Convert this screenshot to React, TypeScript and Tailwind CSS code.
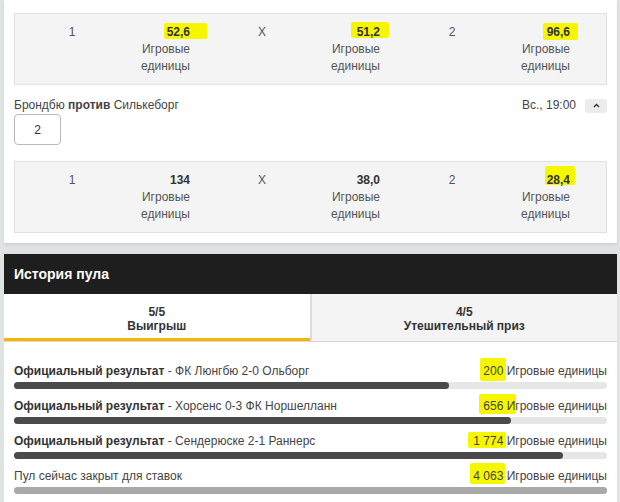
import React from 'react';

type Odd = { label: string; value: string; mark?: string };

const ROW_1: Odd[] = [
  { label: '1', value: '52,6', mark: 'left-[-3px] right-[-17px] top-[-1px] bottom-[2px]' },
  { label: 'X', value: '51,2', mark: 'left-[-6px] right-[-9px] top-[-2px] bottom-[3px]' },
  { label: '2', value: '96,6', mark: 'left-[-4px] right-[-8px] top-[-1px] bottom-[1px]' },
];

const ROW_2: Odd[] = [
  { label: '1', value: '134' },
  { label: 'X', value: '38,0' },
  { label: '2', value: '28,4', mark: 'left-[-2px] right-[-5px] top-[-6px] bottom-[4px]' },
];

const RESULTS = [
  { bold: 'Официальный результат', rest: ' - ФК Люнгбю 2-0 Ольборг', amount: '200', fill: 73.4, dark: true, mark: 'left-[-3px] right-[-3px] top-[-5px] bottom-[-1px]' },
  { bold: 'Официальный результат', rest: ' - Хорсенс 0-3 ФК Норшелланн', amount: '656', fill: 83.8, dark: true, mark: 'left-[-4px] right-[-13px] top-[-4px] bottom-[1px]' },
  { bold: 'Официальный результат', rest: ' - Сендерюске 2-1 Раннерс', amount: '1 774', fill: 92.6, dark: true, mark: 'left-[-5px] right-[-3px] top-[-1px] bottom-[2px]' },
  { bold: '', rest: 'Пул сейчас закрыт для ставок', amount: '4 063', fill: 100, dark: false, mark: 'left-[-3px] right-[-2px] top-[-5px] bottom-[1px]' },
];

// жёлтая пометка маркером под числом (родитель должен быть isolate)
function Marked({ text, mark }: { text: string; mark?: string }) {
  if (!mark) return <span>{text}</span>;
  return (
    <span className="relative inline-block">
      <span className={`absolute -z-10 rounded-[2px] bg-[#f6f600] ${mark}`} />
      {text}
    </span>
  );
}

function OddsBox({ odds }: { odds: Odd[] }) {
  return (
    <div className="flex gap-[24px] border border-[#e0e0e0] bg-[#f4f4f4] pb-[9px] pl-[9px] pt-[10px] leading-[17px]">
      {odds.map((o) => (
        <div key={o.label} className="flex">
          <div className="w-[96px] text-center text-[#555]">{o.label}</div>
          <div className="isolate w-[70px] text-right">
            <div className="font-bold text-[#333]">
              <Marked text={o.value} mark={o.mark} />
            </div>
            <div className="text-[#555]">Игровые единицы</div>
          </div>
        </div>
      ))}
    </div>
  );
}

export default function App() {
  return (
    <div
      className="min-h-screen bg-[#dfe3e3] pl-[4px] pr-[3px] text-[12px] text-[#333]"
      style={{ fontFamily: '"Liberation Sans", Arial, sans-serif' }}
    >
      {/* Карточка матча */}
      <div className="bg-white px-[10px] pb-[10px] pt-[13px] shadow-[0_2px_3px_rgba(0,0,0,0.08)]">
        <OddsBox odds={ROW_1} />

        <div className="mt-[12px] flex items-center justify-between leading-[17px]">
          <div className="text-[#444]">
            Брондбю <span className="font-bold">против</span> Силькеборг
          </div>
          <div className="flex items-center gap-[9px] text-[#444]">
            <span>Вс., 19:00</span>
            <button className="flex h-[14px] w-[22px] items-center justify-center rounded-[3px] bg-[#ececec]">
              <svg width="7" height="5" viewBox="0 0 7 5" fill="none">
                <path d="M1 4L3.5 1.5L6 4" stroke="#333" strokeWidth="1.4" />
              </svg>
            </button>
          </div>
        </div>

        <div className="flex h-[31px] w-[47px] items-center justify-center rounded-[4px] border border-[#bbb] text-[#333]">
          2
        </div>

        <div className="mt-[16px]">
          <OddsBox odds={ROW_2} />
        </div>
      </div>

      {/* История пула */}
      <div className="mt-[11px] bg-white">
        <div className="flex h-[40px] items-center bg-[#1e1e1e] pl-[10px] text-[14px] font-bold text-white">
          История пула
        </div>

        <div className="flex border-b border-[#d8d8d8] text-center font-bold leading-[14px] text-[#333]">
          <div className="h-[47px] flex-1 border-b-[3px] border-[#f7b500] bg-white pt-[11px]">
            <div>5/5</div>
            <div>Выигрыш</div>
          </div>
          <div className="h-[47px] flex-1 border-l-2 border-[#dcdcdc] bg-[#f4f4f4] pt-[11px]">
            <div>4/5</div>
            <div>Утешительный приз</div>
          </div>
        </div>

        <div className="flex flex-col gap-[9px] px-[10px] pb-[12px] pt-[21px]">
          {RESULTS.map((r, i) => (
            <div key={i}>
              <div className="flex justify-between leading-[17px]">
                <div className="text-[#444]">
                  {r.bold && <span className="font-bold text-[#333]">{r.bold}</span>}
                  {r.rest}
                </div>
                <div className="isolate text-[#444]">
                  <Marked text={r.amount} mark={r.mark} /> Игровые единицы
                </div>
              </div>
              <div className="mt-[2px] h-[7px] rounded-full bg-[#e6e6e6]">
                <div
                  className={`h-full rounded-full ${r.dark ? 'bg-[#4a4a4a]' : 'bg-[#a9a9a9]'}`}
                  style={{ width: `${r.fill}%` }}
                />
              </div>
            </div>
          ))}
        </div>
      </div>
    </div>
  );
}
